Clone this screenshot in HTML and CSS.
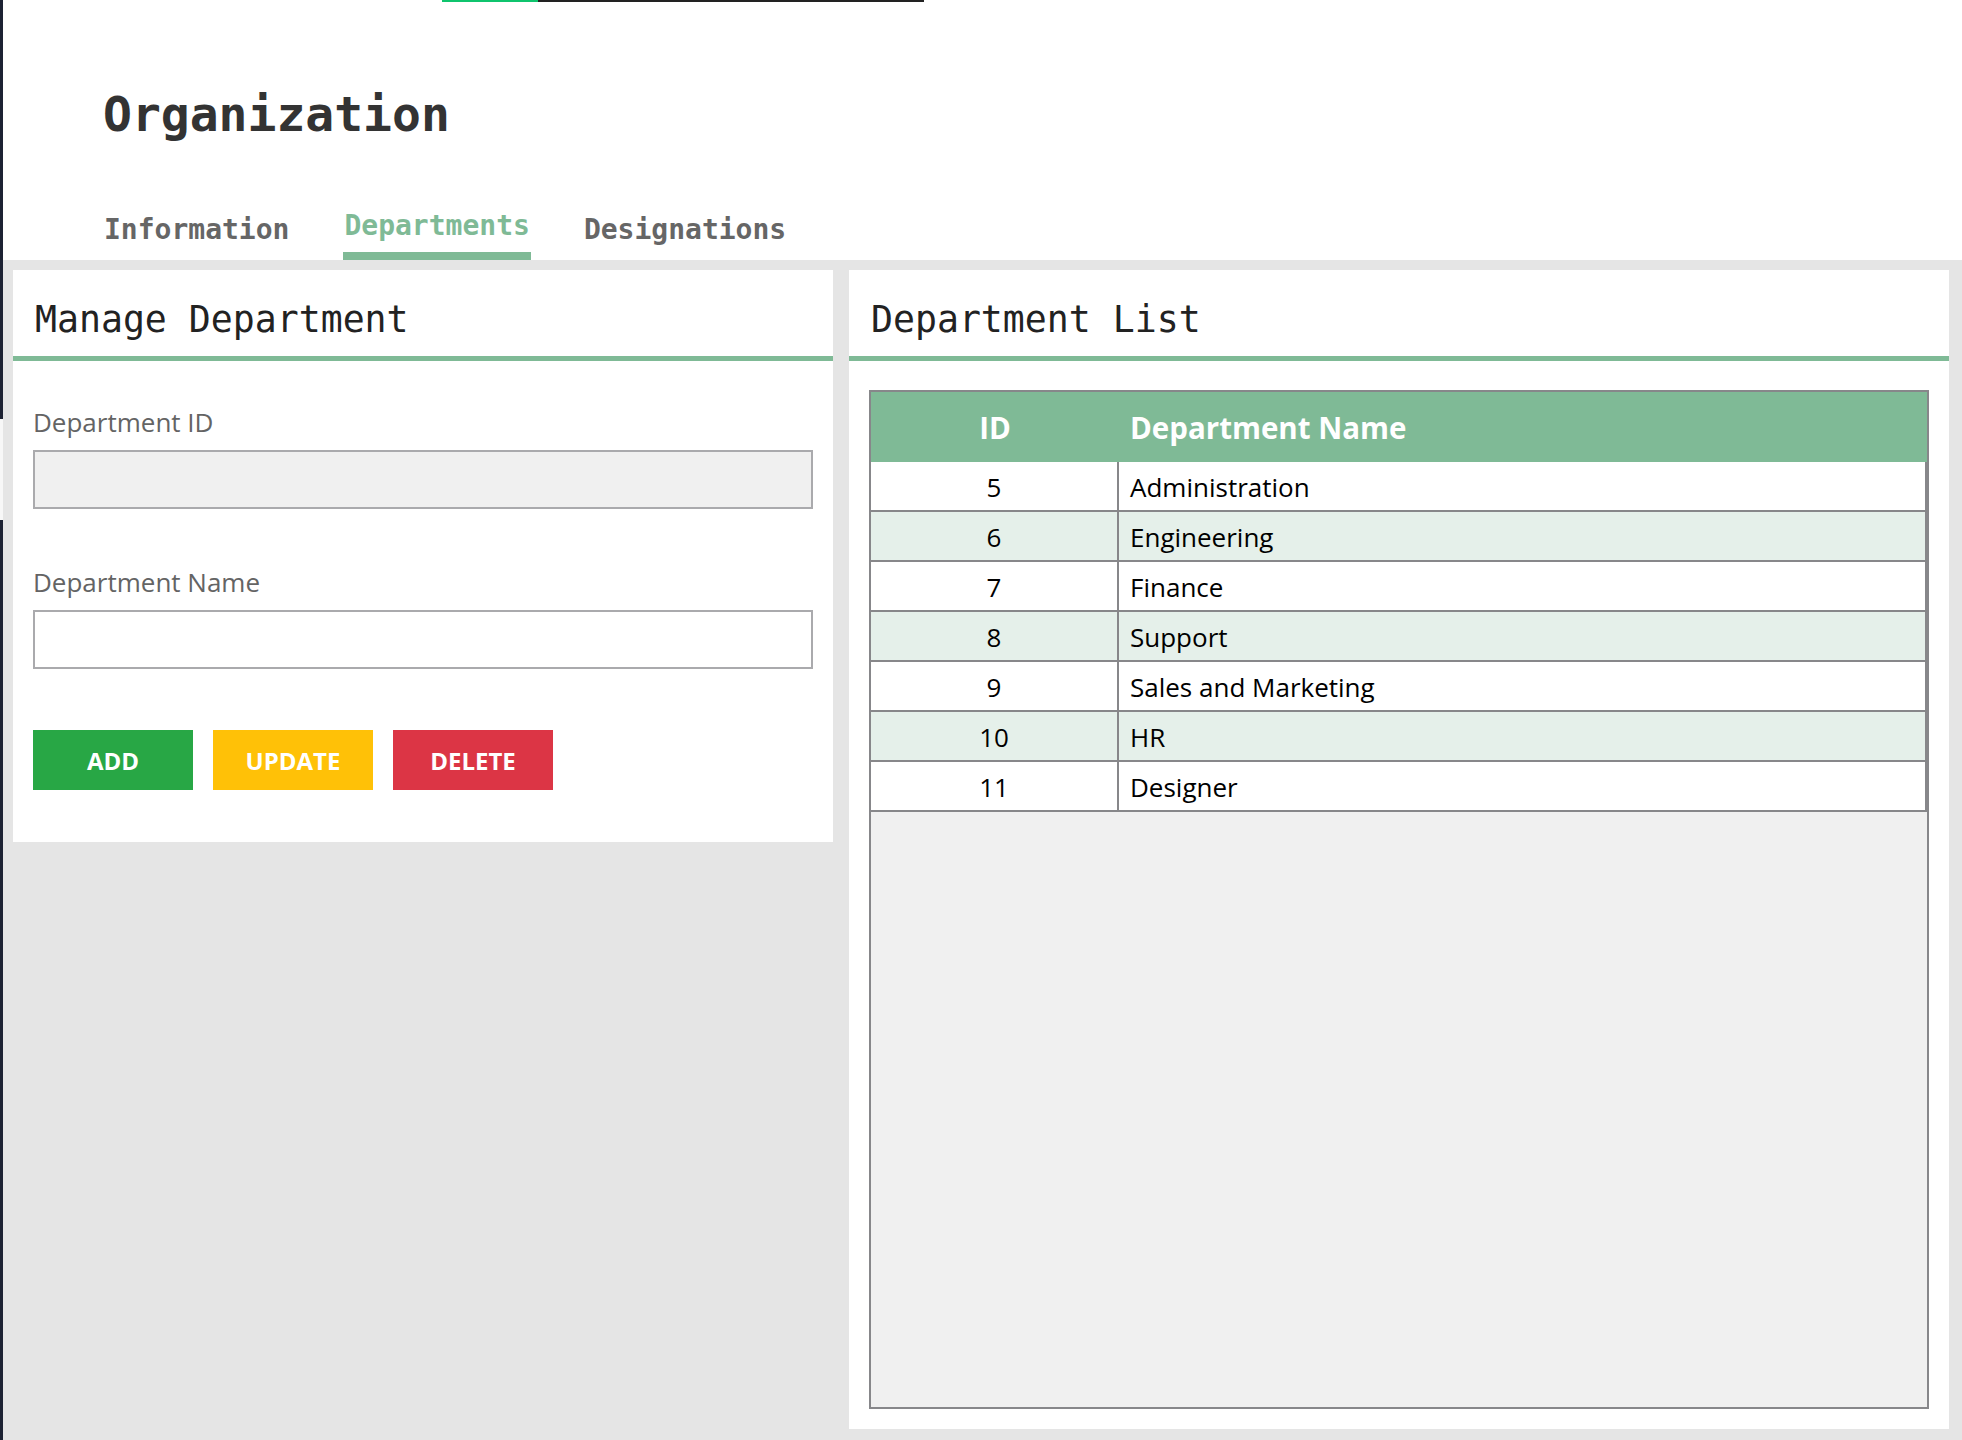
FILE: index.html
```html
<!DOCTYPE html>
<html lang="en">
<head>
<meta charset="utf-8">
<title>Organization - Departments</title>
<link rel="stylesheet" href="styles.css">
</head>
<body>
<div class="app">
  <div class="edge">
    <div class="edge-top"></div>
    <div class="edge-gap"></div>
    <div class="edge-bottom"></div>
  </div>
  <div class="main">
    <div class="topbar"><span class="tb-green"></span><span class="tb-dark"></span></div>
    <header class="header">
      <h1 class="title">Organization</h1>
      <nav class="tabs">
        <a class="tab">Information</a>
        <a class="tab active">Departments</a>
        <a class="tab">Designations</a>
      </nav>
    </header>
    <div class="content">
      <section class="panel panel-form">
        <h2 class="panel-title">Manage Department</h2>
        <div class="form">
          <div class="field">
            <label class="label">Department ID</label>
            <input class="input input-disabled" type="text" disabled>
          </div>
          <div class="field">
            <label class="label">Department Name</label>
            <input class="input" type="text">
          </div>
          <div class="buttons">
            <button class="btn btn-add">ADD</button>
            <button class="btn btn-update">UPDATE</button>
            <button class="btn btn-delete">DELETE</button>
          </div>
        </div>
      </section>
      <section class="panel panel-list">
        <h2 class="panel-title">Department List</h2>
        <div class="grid-wrap">
          <table class="grid">
            <colgroup><col class="col-id"><col class="col-name"></colgroup>
            <thead>
              <tr><th class="th-id">ID</th><th class="th-name">Department Name</th></tr>
            </thead>
            <tbody>
              <tr><td class="td-id">5</td><td class="td-name">Administration</td></tr>
              <tr class="alt"><td class="td-id">6</td><td class="td-name">Engineering</td></tr>
              <tr><td class="td-id">7</td><td class="td-name">Finance</td></tr>
              <tr class="alt"><td class="td-id">8</td><td class="td-name">Support</td></tr>
              <tr><td class="td-id">9</td><td class="td-name">Sales and Marketing</td></tr>
              <tr class="alt"><td class="td-id">10</td><td class="td-name">HR</td></tr>
              <tr><td class="td-id">11</td><td class="td-name">Designer</td></tr>
            </tbody>
          </table>
        </div>
      </section>
    </div>
  </div>
</div>
</body>
</html>
```
FILE: styles.css
```css
* { box-sizing: border-box; }
html, body { margin: 0; padding: 0; }
body {
  width: 1962px;
  height: 1440px;
  overflow: hidden;
  background: #ffffff;
  font-family: "Open Sans", "Noto Sans", sans-serif;
}
.app {
  display: flex;
  height: 1440px;
}
.edge {
  width: 3px;
  display: flex;
  flex-direction: column;
}
.edge-top { height: 419px; background: #1d2233; }
.edge-gap { height: 101px; background: #f7f7f7; }
.edge-bottom { flex: 1; background: #1d2233; }

.main {
  flex: 1;
  display: flex;
  flex-direction: column;
  min-width: 0;
}
.topbar {
  display: flex;
  height: 2px;
  margin-left: 439px;
}
.tb-green { width: 96px; background: #0fc46d; }
.tb-dark { width: 386px; background: #222222; }

.header {
  background: #ffffff;
  padding: 84px 0 0 100px;
  height: 258px;
}
.title {
  margin: 0 0 68px 0;
  font-family: "DejaVu Sans Mono", monospace;
  font-weight: bold;
  font-size: 48px;
  line-height: 56px;
  color: #333333;
}
.tabs {
  display: flex;
  align-items: flex-end;
}
.tab {
  font-family: "DejaVu Sans Mono", monospace;
  font-weight: bold;
  font-size: 28px;
  line-height: 32px;
  color: #666666;
  padding: 0 1px 14px;
}
.tab + .tab { margin-left: 53px; }
.tab.active {
  color: #7fba96;
  padding-bottom: 10px;
  border-bottom: 8px solid #7fba96;
}
.tab.active + .tab { margin-left: 52px; }

.content {
  flex: 1;
  background: #e5e5e5;
  padding: 10px 13px 11px 10px;
  display: grid;
  grid-template-columns: 820px 1fr;
  gap: 16px;
}
.panel {
  background: #ffffff;
}
.panel-form { align-self: start; }
.panel-list {
  display: flex;
  flex-direction: column;
}
.panel-title {
  margin: 0;
  padding: 29px 22px 15px;
  font-family: "DejaVu Sans Mono", monospace;
  font-weight: normal;
  font-size: 36.5px;
  line-height: 42px;
  color: #222222;
  border-bottom: 5px solid #7fba96;
}

.form {
  padding: 43px 20px 52px;
}
.field + .field { margin-top: 55px; }
.label {
  display: block;
  font-size: 26px;
  line-height: 36px;
  color: #646464;
  margin-bottom: 10px;
}
.input {
  display: block;
  width: 100%;
  height: 59px;
  border: 2px solid #aaaaad;
  background: #ffffff;
  font-family: "Open Sans", sans-serif;
  font-size: 24px;
  padding: 0 10px;
  outline: none;
}
.input-disabled { background: #f0f0f0; }

.buttons {
  display: flex;
  gap: 20px;
  margin-top: 61px;
}
.btn {
  width: 160px;
  height: 60px;
  border: none;
  font-family: "Open Sans", sans-serif;
  font-weight: bold;
  font-size: 24px;
  color: #ffffff;
  padding: 0;
}
.btn-add { background: #28a745; }
.btn-update { background: #ffc107; }
.btn-delete { background: #dc3545; }

.grid-wrap {
  flex: 1;
  margin: 29px 20px 20px;
  border: 2px solid #87878a;
  background: #f0f0f0;
}
.grid {
  width: 100%;
  table-layout: fixed;
  border-collapse: separate;
  border-spacing: 0;
}
.col-id { width: 248px; }
.grid th {
  background: #7fba96;
  color: #ffffff;
  font-weight: bold;
  font-size: 29.5px;
  line-height: 68px;
  padding: 2px 0 0;
}
.th-id { text-align: center; }
.grid th.th-name { text-align: left; padding-left: 11px; }
.grid td {
  background: #ffffff;
  color: #000000;
  font-size: 26px;
  line-height: 46px;
  padding: 2px 0 0;
  border-bottom: 2px solid #87878a;
  border-right: 2px solid #87878a;
}
.grid tr.alt td { background: #e5f0ea; }
.td-id { text-align: center; }
.grid td.td-name { padding-left: 11px; }
```
